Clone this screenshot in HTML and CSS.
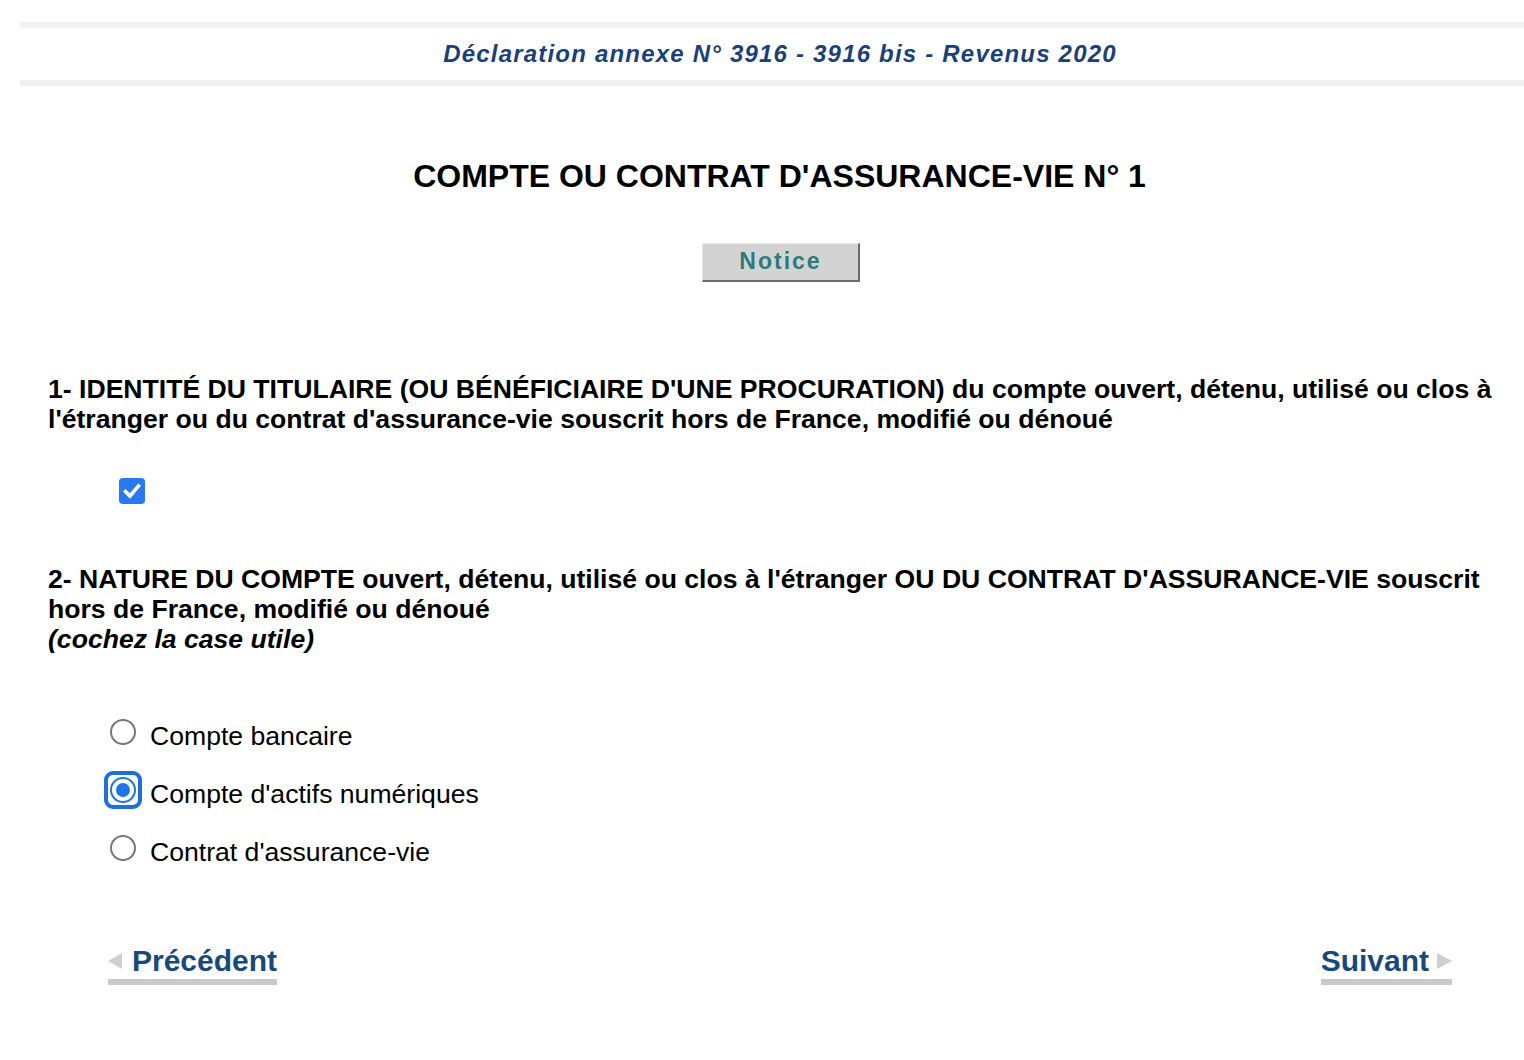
FILE: index.html
```html
<!DOCTYPE html>
<html lang="fr">
<head>
<meta charset="utf-8">
<title>Déclaration annexe N° 3916</title>
<link rel="stylesheet" href="styles.css">
</head>
<body>
<header class="topbar">
  <div class="topbar-title">Déclaration annexe N° 3916 - 3916 bis - Revenus 2020</div>
</header>
<main class="page">
  <h1 class="page-title">COMPTE OU CONTRAT D'ASSURANCE-VIE N° 1</h1>
  <div class="notice-row"><span class="notice-btn">Notice</span></div>

  <section class="section section-1">
    <h2 class="section-heading">1- IDENTITÉ DU TITULAIRE (OU BÉNÉFICIAIRE D'UNE PROCURATION) du compte ouvert, détenu, utilisé ou clos à l'étranger ou du contrat d'assurance-vie souscrit hors de France, modifié ou dénoué</h2>
    <div class="check-row">
      <span class="checkbox"><svg viewBox="0 0 26 26" width="26" height="26"><path d="M6.5 13.5 L11 18 L19.5 8" fill="none" stroke="#fff" stroke-width="3.6" stroke-linecap="square" stroke-linejoin="miter"/></svg></span>
    </div>
  </section>

  <section class="section section-2">
    <h2 class="section-heading">2- NATURE DU COMPTE ouvert, détenu, utilisé ou clos à l'étranger OU DU CONTRAT D'ASSURANCE-VIE souscrit hors de France, modifié ou dénoué<br><em>(cochez la case utile)</em></h2>
    <ul class="radio-list">
      <li class="radio-item"><span class="radio"></span><span class="radio-label">Compte bancaire</span></li>
      <li class="radio-item"><span class="radio radio-on"><span class="radio-dot"></span></span><span class="radio-label">Compte d'actifs numériques</span></li>
      <li class="radio-item"><span class="radio"></span><span class="radio-label">Contrat d'assurance-vie</span></li>
    </ul>
  </section>

  <nav class="nav-row">
    <a class="nav-link nav-prev" href="#"><span class="tri tri-left"></span>Précédent</a>
    <a class="nav-link nav-next" href="#">Suivant<span class="tri tri-right"></span></a>
  </nav>
</main>
</body>
</html>
```
FILE: styles.css
```css
* { box-sizing: border-box; }
html, body { margin: 0; padding: 0; background: #fff; }
body {
  font-family: "Liberation Sans", Arial, sans-serif;
  color: #000;
  padding-top: 22px;
}
.topbar {
  margin-left: 20px;
  border-top: 6px solid #f1f1f1;
  border-bottom: 6px solid #f1f1f1;
  height: 64px;
  display: flex;
  align-items: center;
  justify-content: center;
  padding-left: 16px;
}
.topbar-title {
  font-size: 24px;
  font-weight: bold;
  font-style: italic;
  letter-spacing: 1.2px;
  color: #1b3f7b;
}
.page {
  padding: 0 28px 0 48px;
}
.page-title {
  margin: 70px 0 0;
  text-align: center;
  font-size: 32px;
  line-height: 40px;
  font-weight: bold;
  padding-left: 15px;
}
.notice-row {
  display: flex;
  justify-content: center;
  margin-top: 47px;
  padding-left: 18px;
}
.notice-btn {
  display: inline-block;
  width: 158px;
  height: 39px;
  background: #d3d3d3;
  border-top: 1px solid #e8e8e8;
  border-left: 1px solid #e8e8e8;
  border-right: 2px solid #6b6b6b;
  border-bottom: 2px solid #6b6b6b;
  text-align: center;
  font-size: 23px;
  line-height: 35px;
  font-weight: bold;
  letter-spacing: 2px;
  color: #2b7b7a;
}
.section { margin: 0; }
.section-1 { margin-top: 92px; }
.section-heading {
  margin: 0;
  font-size: 26.6px;
  line-height: 30px;
  font-weight: bold;
}
.section-heading em { font-style: italic; }
.check-row {
  margin-top: 44px;
  padding-left: 71px;
  height: 28px;
}
.checkbox {
  display: inline-block;
  width: 26px;
  height: 26px;
  border-radius: 4px;
  background: #2878f0;
}
.checkbox svg { display: block; }
.section-2 { margin-top: 58px; }
.radio-list {
  list-style: none;
  margin: 53px 0 0;
  padding: 0 0 0 62px;
}
.radio-item {
  display: flex;
  align-items: center;
  height: 58px;
}
.radio {
  width: 26px;
  height: 26px;
  border: 2px solid #777;
  border-radius: 50%;
  margin-right: 14px;
  margin-bottom: 8px;
  position: relative;
  flex: none;
}
.radio-on {
  border: 2px solid #1f74e8;
}
.radio-on::before {
  content: "";
  position: absolute;
  inset: -8px;
  border-radius: 9px;
  border: 4px solid #1f6fd9;
}
.radio-dot {
  position: absolute;
  left: 4px; top: 4px;
  width: 14px; height: 14px;
  border-radius: 50%;
  background: #1f74e8;
}
.radio-label {
  font-size: 26.6px;
  line-height: 30px;
}
.nav-row {
  display: flex;
  justify-content: space-between;
  margin-top: 62px;
  padding: 0 44px 0 60px;
}
.nav-link {
  display: inline-flex;
  align-items: center;
  color: #174a7c;
  text-decoration: none;
  font-size: 30px;
  font-weight: bold;
  line-height: 36px;
  border-bottom: 6px solid #cacaca;
}
.tri {
  display: inline-block;
  width: 0; height: 0;
  border-top: 8px solid transparent;
  border-bottom: 8px solid transparent;
}
.tri-left { border-right: 14px solid #cfcfcf; margin-right: 10px; }
.tri-right { border-left: 15px solid #cfcfcf; margin-left: 8px; }
```
